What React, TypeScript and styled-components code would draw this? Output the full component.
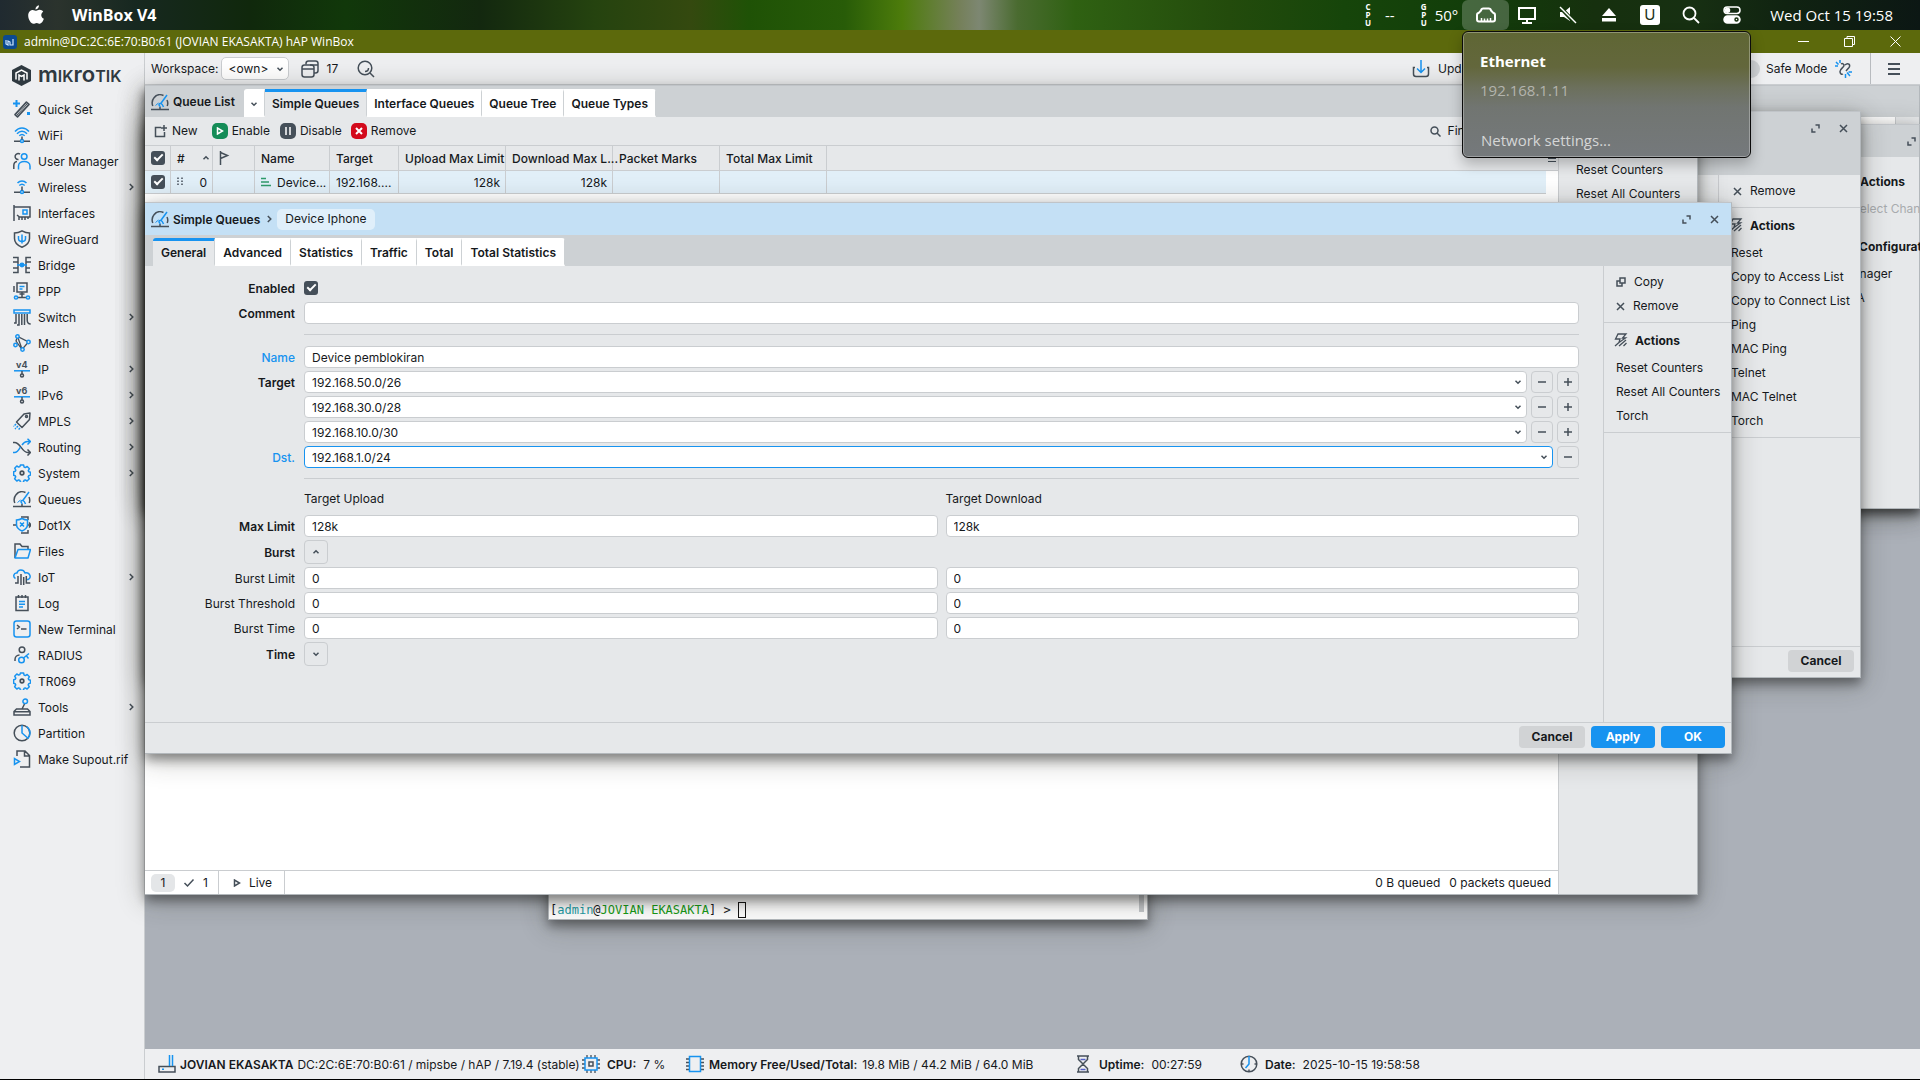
import React from "react";
import styled, { createGlobalStyle, css } from "styled-components";

const ink = "#16191c";
const dark = "#454f59";
const blue = "#1793f0";
const line = "#cacdd0";
const panel = "#e6e8ea";
const header = "#cdd1d4";

const GlobalStyle = createGlobalStyle`
  *, *::before, *::after { box-sizing: border-box; }
  html, body, #root { height: 100%; }
  body { margin: 0; background: #000; overflow: hidden; }
  body, button, input, select, table { font-family: Inter, "Liberation Sans", sans-serif; font-size: 12px; color: ${ink}; }
  button, input, select { margin: 0; padding: 0; border: 0; background: none; line-height: 16px; }
  input:focus, button:focus, select:focus { outline: none; }
  a { color: inherit; text-decoration: none; }
  p, h1, h2, ul { margin: 0; padding: 0; font: inherit; list-style: none; }
  svg { display: block; flex: none; }
`;

/* ---------- icons ---------- */

const Svg = styled.svg.attrs<{ $size?: number; $w?: number }>(p => ({
  width: p.$w ?? p.$size ?? 18,
  height: p.$size ?? 18,
  "aria-hidden": true,
}))<{ $size?: number; $w?: number; $color?: string; $stroke?: number }>`
  fill: none;
  stroke: ${p => p.$color ?? dark};
  stroke-width: ${p => p.$stroke ?? 1.5};
  .b { stroke: ${blue}; }
  .f { fill: ${panel}; }
  text { fill: ${dark}; stroke: none; font: 700 9px Inter, sans-serif; }
`;

const Gear = () => (
  <>
    <path className="b" strokeLinejoin="round" d="M7.4 1h3.2l.5 2.1 1.2.5 1.9-1.1 2.2 2.2-1.1 1.9.5 1.2 1.7.4v2.9l-1.8.6-.5 1.2 1.1 1.9-2.2 2.2-1.9-1.1-1.2.5-.5 2H7.4l-.5-2-1.2-.5-1.9 1.1-2.2-2.2 1.1-1.9-.5-1.2-1.6-.5V7.8l1.7-.5.5-1.2-1.1-1.9L3.8 2l1.9 1.1 1.2-.5z" />
    <circle cx="9" cy="9" r="1.8" strokeWidth="1.700" />
  </>
);

const Gauge = () => (
  <>
    <path d="M1.800 13C.8 10.500.8 7.500 3 4.800 5.500 1.500 9.500 1 12.500 2.500M16 7c1 2 1 4 .2 6M0 16.600h18M9 16v-2" />
    <path className="b" d="M16 2 9.800 10.500M9 14c.3-1.200-1-1-1-2.200 0-1 .8-1.500 1.800-1.300 1.200.2 1.800 1 2.700 3.500" />
    <path className="b" d="M4.500 12.500 7.500 10" strokeWidth="1" />
  </>
);

const icons: Record<string, React.ReactNode> = {
  quickset: <><path d="M2 14.600 13.400 2.200l2.600 2.200L4.500 16.800z" strokeLinejoin="round" strokeWidth="1.700" /><path d="m4 15 10-11" strokeWidth="1" /><path className="b" d="M3.500 0v7M0 3.500h7" strokeWidth="2" /><path className="b" d="M14 13.500h3" strokeWidth="3" /></>,
  wifi: <><path className="b" d="M2 5.500c4-4.700 10-4.700 14 0M4 7.800c3-3.400 7-3.400 10 0M6.300 9.800c1.700-1.600 3.700-1.600 5.400 0" /><circle className="b" cx="9" cy="15" r="1.500" /><path d="M1 15.300h6M11 15.300h6M9 10.500v3" /></>,
  users: <><path d="M7 2.200a3 3 0 1 0-1.500 5.300M.8 17v-3.500c0-2.200 1.300-3.700 3.200-4" /><circle className="b" cx="11.200" cy="4.500" r="2.800" /><path className="b" d="M5.500 17.500v-3.500c0-6 11.500-6 11.500 0v3.500" /></>,
  wireless: <><path className="b" d="M4.500 5c2.700-2.800 6.300-2.800 9 0M6.300 7.500c1.700-1.600 3.700-1.600 5.400 0" /><circle className="b" cx="9" cy="14" r="1.500" /><path d="M1 14.300h6M11 14.300h6M9 8.500v4" /></>,
  interfaces: <><path d="M1 1v16M1 3h16v10H6.500L4 11M6 13v3M9 13v3M12 13v3M15 13v2" /><path className="b" d="M10 6h4v4h-4z" /></>,
  wireguard: <><path d="M9 .8c2.600 1.500 5 2.200 7.500 2.200v5.500c0 4-3 7-7.500 8.700-4.500-1.700-7.500-4.700-7.500-8.700V3C4 3 6.400 2.300 9 .8z" /><path className="b" d="M5.500 6v2.500c0 2 1.500 3 3.500 3s3.500-1 3.500-3V6M9 4.500v9" /></>,
  bridge: <><path d="M0 1.500h5v15H0M0 6h5M0 12h5M18 1.500h-5v15h4M13 6h5M13 12h4" /><path className="b" d="M4 9h10" /><circle className="b" cx="9" cy="9" r="1.700" fill={blue} /></>,
  ppp: <><path d="M4 1h10v9H4zM1 4v6M6.500 12h5M9 10v5M4 15.500h10" /><path className="b" d="M6.500 4.500h5M6.500 7h3" /><circle className="b f" cx="3" cy="15.500" r="1.600" /><circle className="b f" cx="15" cy="15.500" r="1.600" /></>,
  switch: <><path d="M3 6v9H1M6 6v11H4M8.800 6v11M11.500 6v11M14.200 6v6c0 2 1 4 3.500 4" /><path className="b" d="M1 2h16v3H1z" /></>,
  mesh: <><path d="M4.500 2.500 3 7l6 8.500L15.500 8zM4.500 2.500 9 15" strokeWidth="1.300" /><circle className="b f" cx="4.500" cy="2.500" r="1.700" /><circle className="b f" cx="15.500" cy="8" r="1.700" /><circle className="b f" cx="9.500" cy="15.500" r="1.700" /><circle className="b f" cx="2.500" cy="11" r="1.700" /></>,
  ip: <><text x="3" y="7.500">v4</text><path className="b" d="M1 10.800h16" /><path d="M9 11v3" /><circle cx="9" cy="15.500" r="1.500" /></>,
  ipv6: <><text x="3" y="7.500">v6</text><path className="b" d="M1 10.800h16" /><path d="M9 11v3" /><circle cx="9" cy="15.500" r="1.500" /></>,
  mpls: <><path d="m3.500 10 7.500-8 6-1-.5 6.500-7.500 8z" strokeLinejoin="round" /><circle cx="13.500" cy="4.500" r="1" /><path className="b" d="m3 12-2.500 2.500M5 14l-3 3M7 16l-1.500 1.500" strokeDasharray="2 1" /></>,
  routing: <><path d="M0 4.500h1.500c6 0 7.500 10 13 10H17M14.500 11.500l3 3-3 3" /><path className="b" d="M0 14.500h1.500c3 0 4.500-3 6-5.500M9 7c1.300-2 2.800-3.500 5.500-3.500H17M14.500.8l3 2.700-3 3" /></>,
  gear: <Gear />,
  gauge: <Gauge />,
  dot1x: <><path d="M8 1h7v3M8 17h7v-3M0 9h3M15 9h3M16 6.500 18 9l-2 2.500" /><path className="b" d="M3.500 4c2 0 3.600-.5 5.500-1.500C11 3.500 12.500 4 14.500 4v4.500c0 3-2 5-5.500 6.500-3.500-1.500-5.500-3.500-5.500-6.500zM7 6.500l4 4M11 6.500l-4 4" /></>,
  files: <><path d="M2 16V2h5l2 2.500h6V7" /><path className="b" d="M5 7.500h12.500L15 16H2z" strokeLinejoin="round" /></>,
  iot: <><path className="b" d="M2.500 10.500C-.5 9 .8 4.500 4 5c1-3.800 6.500-4 8 0 5-1 7 5 3 6.500h-2" /><path d="M5 8v7H2M8 6v11M10.700 9v8M13.300 8v7h4" /></>,
  log: <><path d="M3 3h12v13.500H3zM5.500 1v3M9 1v3M12.500 1v3" /><path className="b" d="M6 7.500h6M6 10.200h6M6 13h4" /></>,
  terminal: <><rect className="b" x="1" y="1" width="16" height="16" rx="2.500" /><path d="m4 5 2.300 2L4 9M8 9h5.500" /></>,
  radius: <><circle cx="9" cy="3.800" r="2.800" /><path d="M2 15v-1.500C2 11 4 9 6.500 9" /><circle className="b" cx="8.500" cy="14" r="2.800" /><path className="b" d="m10.500 12 5.500-4.500M13.500 10l2 2.500" /></>,
  tools: <><path d="M1 13.500 3.500 11h11l2.500 2.500v3.500H1zM1 13.800h16M9 11l2.500-5" /><circle className="b" cx="12.200" cy="3.300" r="2.300" /></>,
  partition: <><circle cx="9" cy="9" r="7.800" /><path className="b" d="M9 1.200V9l6 5.300c3-3.500 2.700-9-1.500-11.800" /></>,
  supout: <><path d="M4 6V1h8l4.500 4.500V17H7M11.500 1v5h5" /><path className="b" d="M1.500 8.500v6l5-3z" /></>,
};

const Icon = ({ name }: { name: string }) => <Svg viewBox="0 0 18 18">{icons[name]}</Svg>;
const Chevron = ({ dir = "down" }: { dir?: "down" | "up" | "right" }) => (
  <Svg viewBox="0 0 8 8" $size={8}>
    <path d={dir === "down" ? "M1.500 2.800 4 5.200l2.500-2.400" : dir === "up" ? "M1.500 5.200 4 2.800l2.500 2.400" : "M2.800 1 5.800 4l-3 3"} />
  </Svg>
);
const Expand = () => <Svg viewBox="0 0 9 9" $size={9}><path d="M4.500 1H8v3.500M1 4.500V8h3.500" /></Svg>;
const Cross = () => <Svg viewBox="0 0 9 9" $size={9}><path d="m1 1 7 7M8 1 1 8" /></Svg>;
const Bolt = () => (
  <Svg viewBox="0 0 14 14" $size={14} $stroke={1.3}>
    <path d="M4 1h8L8.500 5h3L5 9.500 6 6H1.500zM1 13 5 9.500M5 13l7-6M9.500 13l3-3" />
  </Svg>
);
const CopyIcon = () => <Svg viewBox="0 0 10 10" $size={10}><path d="M4 1h5v5H4zM4 4H1v5h5V6" /></Svg>;

/* ---------- desktop menu bar ---------- */

const Screen = styled.div`
  height: 100vh;
  display: flex;
  flex-direction: column;
  padding-bottom: 1px;
`;

const MenuBar = styled.header`
  position: relative;
  z-index: 20;
  flex: 0 0 30px;
  display: flex;
  align-items: center;
  padding: 0 27px 0 28px;
  color: #fff;
  font-family: "Open Sans", "Noto Sans", sans-serif;
  font-size: 15px;
  background: linear-gradient(90deg, #202a30 0%, #2b332d 3%, #172820 7%, #10280c 13%, #11380a 18%, #13280f 25%, #25430f 31%, #34490f 36%, #1f5206 39%, #285c08 44%, #4d7c0b 47%, #75805a 50%, #7d8772 51%, #4a6b30 53%, #2f6112 56%, #234b0c 64%, #16450a 70%, #123d0a 77%, #16300e 83%, #173012 88%, #102311 93%, #0c1714 100%);
`;

const AppName = styled.strong`
  margin-left: 28px;
  flex: 1;
  font-size: 16px;
`;

const Tray = styled.div`
  display: flex;
  align-items: center;
`;

const Gauges = styled.div`
  display: flex;
  align-items: center;
  gap: 14px;
  padding-right: 4px;
  & + & { padding-left: 22px; gap: 8px; }
`;

const Stacked = styled.span`
  display: grid;
  font-size: 8px;
  line-height: 8px;
  font-weight: 700;
  text-align: center;
`;

const TrayButton = styled.button<{ $active?: boolean }>`
  width: ${p => (p.$active ? 47 : 41)}px;
  height: 30px;
  margin-right: ${p => (p.$active ? -3 : 0)}px;
  display: grid;
  place-items: center;
  border-radius: 6px;
  background: ${p => (p.$active ? "rgba(255,255,255,.22)" : "none")};
`;

const UBox = styled.span`
  width: 20px;
  height: 20px;
  border-radius: 3px;
  background: #fff;
  color: #1b2f17;
  font-size: 15px;
  line-height: 20px;
`;

const Clock = styled.time`
  margin-left: 18px;
`;

const white = { $color: "#fff" };

const Popover = styled.section`
  position: absolute;
  top: 31px;
  right: 169px;
  width: 289px;
  height: 127px;
  padding: 19px 17px 0;
  display: flex;
  flex-direction: column;
  border: 1px solid #0b0b0b;
  border-radius: 6px;
  box-shadow: inset 0 0 0 1px rgba(255,255,255,.3), 0 6px 14px rgba(0,0,0,.25);
  background: linear-gradient(180deg, #5f6634 0%, #63673c 28%, #6c705d 45%, #717571 60%, #75797c 100%);
  font-size: 15px;
  line-height: 20px;
  p { margin-top: 9px; color: #b3b4ad; }
  a { margin: 30px 1px 0; color: #d5d6d6; }
`;

const MenuBarView = () => (
  <MenuBar>
    <Svg viewBox="0 0 16 20" $w={16} $size={20} $color="none">
      <path fill="#fff" d="M11 .2c.1 2.200-1.600 4.300-3.500 4.200C7.200 2.400 9 .4 11 .2zM8.300 5.700c.8 0 1.900-1 3.500-.9 1.300.1 2.600.7 3.400 1.900-2.900 1.800-2.400 5.900.7 7.100-.7 2-2.200 4.800-4 4.900-1.200 0-1.700-.8-3.200-.8s-2 .8-3.200.8C3 18.800.2 14.200.2 10.400.2 6.900 2.400 5 4.700 4.900c1.500 0 2.700.8 3.600.8z" />
    </Svg>
    <AppName>WinBox V4</AppName>
    <Tray>
      <Gauges><Stacked><span>C</span><span>P</span><span>U</span></Stacked><span>--</span></Gauges>
      <Gauges><Stacked><span>G</span><span>P</span><span>U</span></Stacked><span>50°</span></Gauges>
      <TrayButton $active aria-label="Network">
        <Svg viewBox="0 0 20 16" $w={20} $size={16} {...white}><path d="M3 14.500c-1.200 0-2-.8-2-2V8c0-1.200.6-2 2-2.300L5 3.500C5.300 2 6 1.500 7.200 1.500h5.600c1.200 0 1.900.5 2.200 2l2 2.200c1.400.3 2 1.100 2 2.300v4.500c0 1.200-.8 2-2 2z" strokeWidth="2" /><path d="M5.500 11v3M8.500 11.500V14M11.500 11.500V14M14.500 11v3" /></Svg>
      </TrayButton>
      <TrayButton aria-label="Display">
        <Svg viewBox="0 0 20 18" $w={20} $size={18} {...white}><path d="M2 2h16v11H2z" strokeWidth="2" /><path d="M5 17h10M10 13v4" strokeWidth="2" /></Svg>
      </TrayButton>
      <TrayButton aria-label="Muted">
        <Svg viewBox="0 0 18 18" {...white}><path fill="#fff" stroke="none" d="M1 6h4l6-5v14L5 11H1z" /><path d="m1 1 15 16" stroke="#16390e" strokeWidth="4" /><path d="m1 1 16 16" /></Svg>
      </TrayButton>
      <TrayButton aria-label="Eject">
        <Svg viewBox="0 0 16 14" $w={16} $size={14} $color="none"><path fill="#fff" d="M8 0l7 8H1zM1 10h14v3.500H1z" /></Svg>
      </TrayButton>
      <TrayButton aria-label="Input"><UBox>U</UBox></TrayButton>
      <TrayButton aria-label="Search">
        <Svg viewBox="0 0 18 18" {...white} $stroke={1.8}><circle cx="7.500" cy="7.500" r="6" /><path d="m12 12 5 5" /></Svg>
      </TrayButton>
      <TrayButton aria-label="Control centre">
        <Svg viewBox="0 0 18 18" {...white}><rect x="1" y="1" width="16" height="6.500" rx="3.200" /><circle cx="4.500" cy="4.200" r="2" fill="#fff" /><rect x="1" y="10" width="16" height="7" rx="3.500" fill="#fff" /><circle cx="13.500" cy="13.500" r="1.500" stroke="#16300e" /></Svg>
      </TrayButton>
      <Clock>Wed Oct 15 19:58</Clock>
    </Tray>
    <Popover>
      <strong>Ethernet</strong>
      <p>192.168.1.11</p>
      <a href="#network">Network settings...</a>
    </Popover>
  </MenuBar>
);

/* ---------- title bar ---------- */

const TitleBar = styled.div`
  flex: 0 0 23px;
  display: flex;
  align-items: center;
  gap: 7px;
  padding: 0 18px 0 3px;
  background: #5c690c;
  color: #fff;
  font-family: "Open Sans", "Noto Sans", sans-serif;
  span { flex: 1; }
`;

const TitleButton = styled.button`
  width: 14px;
  height: 23px;
  margin-left: 25px;
  display: grid;
  place-items: center;
`;

/* ---------- shell ---------- */

const Shell = styled.div`
  flex: 1;
  min-height: 0;
  display: flex;
  background: #eeeff1;
`;

const Sidebar = styled.aside`
  flex: 0 0 145px;
  border-right: 1px solid ${line};
  padding-top: 11px;
`;

const Brand = styled.div`
  display: flex;
  align-items: center;
  gap: 7px;
  height: 22px;
  margin: 0 0 10px 12px;
  color: #2f3940;
  font-size: 22px;
  font-weight: 600;
  line-height: 22px;
  span { font-size: 16px; text-transform: uppercase; }
`;

const NavLink = styled.a`
  display: flex;
  align-items: center;
  gap: 7px;
  height: 26px;
  padding: 0 9px 0 13px;
  font-size: 12px;
  span { flex: 1; white-space: nowrap; }
`;

const Main = styled.main`
  flex: 1;
  min-width: 0;
  display: flex;
  flex-direction: column;
`;

const Toolbar = styled.div`
  position: relative;
  z-index: 2;
  flex: 0 0 32px;
  display: flex;
  align-items: center;
  padding-left: 6px;
  border-bottom: 1px solid ${line};
  background: #eeeff1;
`;

const WorkspaceLabel = styled.label`
  display: flex;
  align-items: center;
  gap: 2px;
`;

const SelectBox = styled.span`
  display: grid;
  align-items: center;
  width: 68px;
  height: 23px;
  border: 1px solid ${line};
  border-radius: 5px;
  background: #fff;
  select, svg { grid-area: 1 / 1; }
  select { appearance: none; padding-left: 7px; height: 21px; }
  svg { justify-self: end; margin-right: 4px; pointer-events: none; }
`;

const ToolButton = styled.button<{ $gap?: number; $ml?: number }>`
  display: flex;
  align-items: center;
  gap: ${p => p.$gap ?? 8}px;
  margin-left: ${p => p.$ml ?? 12}px;
  white-space: nowrap;
`;

const Push = styled.div`
  margin-left: auto;
  display: flex;
  align-items: center;
`;

const UpdateButton = styled(ToolButton)`
  width: 290px;
`;

const SafeMode = styled.label`
  display: flex;
  align-items: center;
  gap: 6px;
  width: 104px;
  margin-left: 28px;
  input {
    appearance: none;
    width: 30px;
    height: 18px;
    border-radius: 9px;
    background: #cfd2d5;
  }
`;

const MenuButton = styled.button`
  width: 50px;
  height: 31px;
  margin-left: 18px;
  padding-right: 3px;
  display: grid;
  place-items: center;
  border-left: 1px solid #b8bbbf;
`;

const Canvas = styled.div`
  position: relative;
  flex: 1;
  background: #abb0b8;
`;

const StatusBar = styled.footer`
  position: relative;
  z-index: 3;
  flex: 0 0 30px;
  display: grid;
  grid-template-columns: 424px 104px 388px 166px auto;
  align-items: center;
  padding-left: 13px;
  background: #eeeff1;
`;

const Stat = styled.div<{ $gap?: number }>`
  display: flex;
  align-items: center;
  gap: ${p => p.$gap ?? 7}px;
  white-space: nowrap;
  strong { font-weight: 600; }
`;

/* ---------- windows ---------- */

const WindowFrame = styled.section<{ $l?: number; $r: number; $t: number; $h: number; $w?: number; $z: number }>`
  position: absolute;
  ${p => (p.$w ? css`width: ${p.$w}px;` : css`left: ${p.$l ?? 0}px;`)}
  right: ${p => p.$r}px;
  top: ${p => p.$t}px;
  height: ${p => p.$h}px;
  z-index: ${p => p.$z};
  display: flex;
  flex-direction: column;
  background: ${panel};
  border: 1px solid #b3b8bc;
  border-top-color: #c0c4c8;
  border-left: 0;
  box-shadow: 0 6px 10px rgba(0,0,0,.36), 0 5px 26px rgba(40,40,30,.32);
`;

const WindowHead = styled.header<{ $h: number; $bg?: string }>`
  flex: none;
  height: ${p => p.$h}px;
  display: flex;
  background: ${p => p.$bg ?? header};
`;

const HeadButtons = styled.div`
  height: 32px;
  margin-left: auto;
  padding-right: 12px;
  display: flex;
  align-items: center;
  gap: 19px;
  button { display: grid; }
`;

const HeadTitle = styled.h1<{ $w?: number }>`
  display: flex;
  align-items: center;
  gap: 4px;
  width: ${p => (p.$w ? p.$w + "px" : "auto")};
  padding-left: 6px;
  font-weight: 600;
  white-space: nowrap;
`;

const Tabs = styled.div<{ $pad?: number }>`
  display: flex;
  align-items: stretch;
  height: 28px;
  padding-left: ${p => p.$pad ?? 0}px;
`;

const Tab = styled.button<{ $active?: boolean }>`
  padding: 0 8px;
  border-right: 1px solid ${header};
  border-top: 3px solid ${p => (p.$active ? blue : "#fff")};
  border-bottom: 2px solid ${p => (p.$active ? panel : "#fff")};
  background: ${p => (p.$active ? panel : "#fff")};
  font-weight: 600;
  white-space: nowrap;
  &:first-child { border-top-left-radius: 3px; }
  &:last-child { border-top-right-radius: 3px; }
`;

const Side = styled.aside<{ $w: number }>`
  flex: 0 0 ${p => p.$w}px;
  min-width: 0;
  border-left: 1px solid ${line};
`;

const SideGroup = styled.div<{ $pt?: number; $plain?: boolean }>`
  padding: ${p => p.$pt ?? 4}px 0 4px;
  border-bottom: ${p => (p.$plain ? "0" : `1px solid ${line}`)};
`;

const SideButton = styled.button<{ $pl?: number; $muted?: boolean }>`
  display: flex;
  align-items: center;
  gap: 8px;
  height: 24px;
  padding-left: ${p => p.$pl ?? 12}px;
  color: ${p => (p.$muted ? "#a8abae" : ink)};
  white-space: nowrap;
`;

const SideTitle = styled.h2<{ $pl?: number }>`
  display: flex;
  align-items: center;
  gap: 7px;
  height: 32px;
  padding-left: ${p => p.$pl ?? 10}px;
  font-weight: 700;
`;

const Row = styled.div`
  flex: 1;
  min-height: 0;
  display: flex;
`;

const Fill = styled.div`
  flex: 1;
  min-width: 0;
  display: flex;
  flex-direction: column;
`;

const Foot = styled.footer`
  flex: 0 0 31px;
  display: flex;
  align-items: center;
  justify-content: flex-end;
  gap: 6px;
  padding: 0 6px 2px;
  border-top: 1px solid ${line};
`;

const FootButton = styled.button<{ $primary?: boolean }>`
  width: ${p => (p.$primary ? 64 : 66)}px;
  height: 22px;
  border-radius: 4px;
  font-weight: 700;
  background: ${p => (p.$primary ? blue : "#d1d3d5")};
  color: ${p => (p.$primary ? "#fff" : ink)};
`;

/* queue list */

const ListTools = styled.div`
  flex: 0 0 28px;
  display: flex;
  align-items: center;
`;

const Badge = styled.span<{ $bg: string }>`
  width: 16px;
  height: 16px;
  display: grid;
  place-items: center;
  border-radius: 5px;
  background: ${p => p.$bg};
`;

const Check = styled.input.attrs({ type: "checkbox" })`
  appearance: none;
  display: grid;
  place-items: center;
  width: 14px;
  height: 14px;
  border-radius: 3px;
  background: ${dark};
  &::before {
    content: "";
    width: 9px;
    height: 5px;
    margin-bottom: 3px;
    border: solid #fff;
    border-width: 0 0 2px 2px;
    transform: rotate(-45deg);
  }
`;

const ListBody = styled.div`
  flex: 1;
  background: #fff;
`;

const TableBar = styled.div`
  display: flex;
  border-top: 1px solid ${line};
  background: linear-gradient(${panel} 24px, ${line} 24px, ${line} 25px, #fff 25px);
`;

const Gutter = styled.span`
  flex: 0 0 12px;
  display: grid;
  justify-content: center;
  padding-top: 8px;
`;

const QueueTable = styled.table`
  flex: 1;
  table-layout: fixed;
  width: 100px;
  border-collapse: separate;
  border-spacing: 0;
  th, td {
    padding: 0 5px 0 6px;
    border-right: 1px solid ${line};
    border-bottom: 1px solid ${line};
    text-align: left;
    white-space: nowrap;
  }
  th { height: 25px; padding-right: 2px; font-weight: 500; }
  td { height: 23px; background: #e1eff8; }
  th:last-child, td:last-child { border-right: 0; }
`;

const Cell = styled.div<{ $end?: boolean; $between?: boolean }>`
  display: flex;
  align-items: center;
  gap: 6px;
  justify-content: ${p => (p.$end ? "flex-end" : p.$between ? "space-between" : "flex-start")};
`;

const ListFoot = styled.div`
  flex: 0 0 24px;
  display: flex;
  align-items: center;
  border-top: 1px solid ${line};
  background: #fff;
`;

const FootCell = styled.div<{ $pl: number; $pr: number }>`
  display: flex;
  align-items: center;
  gap: 8px;
  height: 23px;
  padding: 0 ${p => p.$pr}px 0 ${p => p.$pl}px;
  border-right: 1px solid ${line};
`;

const Pill = styled.span`
  width: 24px;
  height: 18px;
  line-height: 18px;
  border-radius: 5px;
  background: #e4e6e8;
  text-align: center;
`;

const Queued = styled.p`
  display: flex;
  gap: 9px;
  margin-left: auto;
  padding-right: 7px;
`;

const Crumb = styled.button`
  height: 21px;
  margin: auto 0;
  padding: 0 8px;
  border-radius: 5px;
  background: #e0effa;
`;

/* form */

const Form = styled.form`
  flex: 1;
  display: grid;
  grid-template-columns: 150px minmax(0, 1fr);
  column-gap: 9px;
  row-gap: 3px;
  align-content: start;
  padding: 11px 24px 0 0;
`;

const Label = styled.label<{ $kind?: "blue" | "light" }>`
  align-self: center;
  text-align: right;
  font-weight: ${p => (p.$kind === "light" ? 400 : p.$kind === "blue" ? 500 : 600)};
  color: ${p => (p.$kind === "blue" ? blue : ink)};
`;

const Line = styled.div<{ $h?: number }>`
  display: flex;
  align-items: center;
  gap: 4px;
  height: ${p => p.$h ?? 22}px;
  grid-column: 2;
`;

const Pair = styled(Line)`
  display: grid;
  grid-template-columns: 1fr 1fr;
  gap: 8px;
`;

const Captions = styled(Pair)`
  padding-bottom: 5px;
`;

const Rule = styled.hr`
  grid-column: 2;
  width: 100%;
  height: 1px;
  margin: 7px 0 8px;
  border: 0;
  background: ${line};
`;

const Box = styled.div<{ $focus?: boolean }>`
  flex: 1;
  display: flex;
  align-items: center;
  height: 22px;
  border: 1px solid ${p => (p.$focus ? blue : line)};
  border-radius: 4px;
  background: #fff;
  input { flex: 1; min-width: 0; height: 20px; padding: 0 7px; }
  button { display: grid; padding-right: 4px; }
`;

const SmallButton = styled.button<{ $h?: number }>`
  width: ${p => p.$h ?? 22}px;
  height: ${p => p.$h ?? 22}px;
  display: grid;
  place-items: center;
  border: 1px solid ${line};
  border-radius: 4px;
`;

/* terminal */

const Term = styled.pre`
  flex: 1;
  display: flex;
  align-items: flex-end;
  justify-content: space-between;
  margin: 0;
  padding: 0 3px 1px 1px;
  background: #fcfcfc;
  border-left: 1px solid #b3b8bc;
  font: 12px/16px "DejaVu Sans Mono", "Liberation Mono", monospace;
  b { font-weight: 400; color: #1d9aa3; }
  em { font-style: normal; color: #169a16; }
  p { display: flex; }
`;

const Caret = styled.span`
  width: 8px;
  height: 16px;
  border: 1px solid #111;
`;

const Scroll = styled.i`
  width: 5px;
  height: 40px;
  margin-bottom: 6px;
  background: #c4c7ca;
`;

/* ---------- content ---------- */

const nav: [string, string, boolean?][] = [
  ["quickset", "Quick Set"], ["wifi", "WiFi"], ["users", "User Manager"], ["wireless", "Wireless", true],
  ["interfaces", "Interfaces"], ["wireguard", "WireGuard"], ["bridge", "Bridge"], ["ppp", "PPP"],
  ["switch", "Switch", true], ["mesh", "Mesh"], ["ip", "IP", true], ["ipv6", "IPv6", true],
  ["mpls", "MPLS", true], ["routing", "Routing", true], ["gear", "System", true], ["gauge", "Queues"],
  ["dot1x", "Dot1X"], ["files", "Files"], ["iot", "IoT", true], ["log", "Log"],
  ["terminal", "New Terminal"], ["radius", "RADIUS"], ["gear", "TR069"], ["tools", "Tools", true],
  ["partition", "Partition"], ["supout", "Make Supout.rif"],
];

const columns = [26, 42, 42, 75, 69, 107, 107, 107, 107];

const Col = styled.col<{ $w: number }>`width: ${p => p.$w}px;`;

const TabsBottom = styled(Tabs)`
  align-self: flex-end;
  button { padding: 0 7px; }
  button:first-child { width: 21px; padding: 0 6px; }
`;

const FindButton = styled(ToolButton)`
  margin: 0 86px 0 auto;
`;

const ListSide = styled(Side)`
  h2 { height: 41px; }
`;

const QueueList = () => (
  <WindowFrame $r={222} $t={0} $h={810} $z={4}>
    <Row>
      <Fill>
        <WindowHead $h={31}>
          <HeadTitle $w={99}><Icon name="gauge" />Queue List</HeadTitle>
          <TabsBottom>
            <Tab aria-label="Windows"><Chevron /></Tab>
            <Tab $active>Simple Queues</Tab>
            <Tab>Interface Queues</Tab>
            <Tab>Queue Tree</Tab>
            <Tab>Queue Types</Tab>
          </TabsBottom>
        </WindowHead>
        <ListTools>
          <ToolButton $gap={5} $ml={9}>
            <Svg viewBox="0 0 13 13" $size={13}><path d="M7 2.500H1.500v9h9V7M10 0v6M7 3h6" /></Svg>New
          </ToolButton>
          <ToolButton $gap={4} $ml={14}>
            <Badge $bg="#148c57"><Svg viewBox="0 0 8 8" $size={8} $color="#fff"><path d="M1.500 1v6l5-3z" /></Svg></Badge>Enable
          </ToolButton>
          <ToolButton $gap={4} $ml={10}>
            <Badge $bg={dark}><Svg viewBox="0 0 8 8" $size={8} $color="#fff"><path d="M2 0v8M6 0v8" /></Svg></Badge>Disable
          </ToolButton>
          <ToolButton $gap={4} $ml={9}>
            <Badge $bg="#d30a1c"><Svg viewBox="0 0 8 8" $size={8} $color="#fff" $stroke={2}><path d="m1 1 6 6M7 1 1 7" /></Svg></Badge>Remove
          </ToolButton>
          <FindButton $gap={7}>
            <Svg viewBox="0 0 11 11" $size={11}><circle cx="4.500" cy="4.500" r="3.500" /><path d="m7 7 3.500 3.500" /></Svg>Find
          </FindButton>
        </ListTools>
        <TableBar>
          <QueueTable>
            <colgroup>{columns.map((w, i) => <Col key={i} $w={w} />)}<col /></colgroup>
            <thead>
              <tr>
                <th><Check defaultChecked aria-label="Select all" /></th>
                <th><Cell $between>#<Chevron dir="up" /></Cell></th>
                <th><Svg viewBox="0 0 11 14" $w={11} $size={14}><path d="M1.500 0v14M1.500 1.500l7 3-7 3" /></Svg></th>
                <th>Name</th><th>Target</th><th>Upload Max Limit</th><th>Download Max L...</th>
                <th>Packet Marks</th><th>Total Max Limit</th><th />
              </tr>
            </thead>
            <tbody>
              <tr>
                <td><Check defaultChecked aria-label="Select row" /></td>
                <td><Cell $between><Svg viewBox="0 0 6 10" $w={6} $size={10} strokeDasharray="1.500 1.500"><path d="M1 .5v9M5 .5v9" /></Svg>0</Cell></td>
                <td />
                <td><Cell><Svg viewBox="0 0 10 10" $size={10} $color="#2f9b6b"><path d="M0 1.500h5M0 5h8M0 8.500h10" /></Svg>Device...</Cell></td>
                <td>192.168....</td>
                <td><Cell $end>128k</Cell></td>
                <td><Cell $end>128k</Cell></td>
                <td /><td /><td />
              </tr>
            </tbody>
          </QueueTable>
          <Gutter><Svg viewBox="0 0 8 8" $size={8} $stroke={1}><path d="M0 1.500h8M0 4.500h8M0 7.500h8" /></Svg></Gutter>
        </TableBar>
        <ListBody />
        <ListFoot>
          <FootCell $pl={6} $pr={10}>
            <Pill>1</Pill>
            <Svg viewBox="0 0 12 10" $w={12} $size={10}><path d="m1.500 5 3 3 6-6.500" /></Svg>1
          </FootCell>
          <FootCell $pl={14} $pr={12}>
            <Svg viewBox="0 0 8 8" $size={8}><path d="M1.500 1v6l5-3z" /></Svg>Live
          </FootCell>
          <Queued><span>0 B queued</span><span>0 packets queued</span></Queued>
        </ListFoot>
      </Fill>
      <ListSide $w={139}>
        <WindowHead $h={31} />
        <SideTitle><Bolt /></SideTitle>
        <SideButton $pl={17}>Reset Counters</SideButton>
        <SideButton $pl={17}>Reset All Counters</SideButton>
      </ListSide>
    </Row>
  </WindowFrame>
);

const targets = ["192.168.50.0/26", "192.168.30.0/28", "192.168.10.0/30"];
const bursts = ["Burst Limit", "Burst Threshold", "Burst Time"];
const Minus = () => <Svg viewBox="0 0 8 8" $size={8}><path d="M0 4h8" /></Svg>;
const Plus = () => <Svg viewBox="0 0 8 8" $size={8}><path d="M0 4h8M4 0v8" /></Svg>;

const CrumbGap = styled.span`padding: 0 4px 0 1px;`;

const TabStrip = styled.div`
  flex: 0 0 31px;
  display: flex;
  align-items: flex-end;
  background: ${header};
`;

const QueueDialog = () => (
  <WindowFrame $r={188} $t={117} $h={552} $z={6}>
    <WindowHead $h={32} $bg="#c4e0f5">
      <HeadTitle><Icon name="gauge" />Simple Queues<CrumbGap><Chevron dir="right" /></CrumbGap></HeadTitle>
      <Crumb>Device Iphone</Crumb>
      <HeadButtons><button aria-label="Maximize"><Expand /></button><button aria-label="Close"><Cross /></button></HeadButtons>
    </WindowHead>
    <TabStrip>
      <Tabs $pad={8}>
        <Tab $active>General</Tab><Tab>Advanced</Tab><Tab>Statistics</Tab><Tab>Traffic</Tab><Tab>Total</Tab><Tab>Total Statistics</Tab>
      </Tabs>
    </TabStrip>
    <Row>
      <Form>
        <Label htmlFor="enabled">Enabled</Label>
        <Line><Check id="enabled" defaultChecked /></Line>
        <Label htmlFor="comment">Comment</Label>
        <Line><Box><input id="comment" /></Box></Line>
        <Rule />
        <Label htmlFor="name" $kind="blue">Name</Label>
        <Line><Box><input id="name" defaultValue="Device pemblokiran" /></Box></Line>
        {targets.map((t, i) => (
          <React.Fragment key={t}>
            {i === 0 && <Label htmlFor="target0">Target</Label>}
            <Line>
              <Box><input id={"target" + i} aria-label="Target" defaultValue={t} /><button type="button" aria-label="Open"><Chevron /></button></Box>
              <SmallButton type="button" aria-label="Remove target"><Minus /></SmallButton>
              <SmallButton type="button" aria-label="Add target"><Plus /></SmallButton>
            </Line>
          </React.Fragment>
        ))}
        <Label htmlFor="dst" $kind="blue">Dst.</Label>
        <Line>
          <Box $focus><input id="dst" defaultValue="192.168.1.0/24" /><button type="button" aria-label="Open"><Chevron /></button></Box>
          <SmallButton type="button" aria-label="Clear"><Minus /></SmallButton>
        </Line>
        <Rule />
        <Captions><span>Target Upload</span><span>Target Download</span></Captions>
        <Label htmlFor="max">Max Limit</Label>
        <Pair>
          <Box><input id="max" defaultValue="128k" /></Box>
          <Box><input aria-label="Max Limit download" defaultValue="128k" /></Box>
        </Pair>
        <Label as="span">Burst</Label>
        <Line $h={24}><SmallButton type="button" $h={24} aria-label="Collapse burst"><Chevron dir="up" /></SmallButton></Line>
        {bursts.map(b => (
          <React.Fragment key={b}>
            <Label htmlFor={b} $kind="light">{b}</Label>
            <Pair>
              <Box><input id={b} defaultValue="0" /></Box>
              <Box><input aria-label={b + " download"} defaultValue="0" /></Box>
            </Pair>
          </React.Fragment>
        ))}
        <Label as="span">Time</Label>
        <Line $h={24}><SmallButton type="button" $h={24} aria-label="Expand time"><Chevron /></SmallButton></Line>
      </Form>
      <Side $w={128}>
        <SideGroup>
          <SideButton><CopyIcon />Copy</SideButton>
          <SideButton><Cross />Remove</SideButton>
        </SideGroup>
        <SideGroup $pt={1}>
          <SideTitle><Bolt />Actions</SideTitle>
          <SideButton>Reset Counters</SideButton>
          <SideButton>Reset All Counters</SideButton>
          <SideButton>Torch</SideButton>
        </SideGroup>
      </Side>
    </Row>
    <Foot><FootButton>Cancel</FootButton><FootButton $primary>Apply</FootButton><FootButton $primary>OK</FootButton></Foot>
  </WindowFrame>
);

const Registration = () => (
  <WindowFrame $r={59} $t={26} $h={567} $z={3}>
    <WindowHead $h={63}>
      <HeadButtons><button aria-label="Maximize"><Expand /></button><button aria-label="Close"><Cross /></button></HeadButtons>
    </WindowHead>
    <Row>
      <Fill />
      <Side $w={142}>
        <SideGroup><SideButton $pl={14}><Cross />Remove</SideButton></SideGroup>
        <SideGroup $pt={1}>
          <SideTitle><Bolt />Actions</SideTitle>
          {["Reset", "Copy to Access List", "Copy to Connect List", "Ping", "MAC Ping", "Telnet", "MAC Telnet", "Torch"].map(t => (
            <SideButton key={t}>{t}</SideButton>
          ))}
        </SideGroup>
      </Side>
    </Row>
    <Foot><FootButton>Cancel</FootButton></Foot>
  </WindowFrame>
);

const CornerButton = styled.button`
  margin-right: -14px;
`;

const CapsWindow = () => (
  <WindowFrame $r={0} $t={39} $h={385} $z={2}>
    <WindowHead $h={32}>
      <HeadButtons><CornerButton aria-label="Maximize"><Expand /></CornerButton></HeadButtons>
    </WindowHead>
    <Row>
      <Fill />
      <Side $w={92}>
        <SideGroup $pt={8} $plain>
          <SideTitle $pl={11}><Bolt />Actions</SideTitle>
          <SideButton $pl={24} $muted>Select Channel</SideButton>
        </SideGroup>
        <SideGroup $pt={5} $plain>
          <SideTitle $pl={31}>Configuration</SideTitle>
          <SideButton $pl={14}>Manager</SideButton>
          <SideButton $pl={20}>CA</SideButton>
        </SideGroup>
      </Side>
    </Row>
  </WindowFrame>
);

const BackWindow = () => (
  <WindowFrame $r={0} $t={0} $h={420} $z={1}>
    <WindowHead $h={31} />
    <Row><ListBody /><Side $w={24} /></Row>
  </WindowFrame>
);

const TermFrame = styled(WindowFrame)`
  width: 600px;
`;

const Terminal = () => (
  <TermFrame $l={403} $r={0} $t={600} $h={235} $z={2}>
    <Term>
      <p>[<b>admin</b>@<em>JOVIAN EKASAKTA</em>] &gt; <Caret /></p>
      <Scroll />
    </Term>
  </TermFrame>
);

export default function App() {
  return (
    <>
      <GlobalStyle />
      <Screen>
        <MenuBarView />
        <TitleBar>
          <Svg viewBox="0 0 14 14" $size={14} $color="#cfe6ff"><rect width="14" height="14" rx="3" fill="#0c4a8f" stroke="none" /><path d="M3 5v4l2 1V6l2 1v3h3V4" strokeWidth="1.200" /></Svg>
          <span>admin@DC:2C:6E:70:B0:61 (JOVIAN EKASAKTA) hAP WinBox</span>
          <TitleButton aria-label="Minimize"><Svg viewBox="0 0 11 11" $size={11} $color="#fff" $stroke={1}><path d="M0 5.500h11" /></Svg></TitleButton>
          <TitleButton aria-label="Restore"><Svg viewBox="0 0 11 11" $size={11} $color="#fff" $stroke={1}><path d="M.5 2.500h8v8h-8zM3 2.500v-2h7.500v8h-2" /></Svg></TitleButton>
          <TitleButton aria-label="Close"><Svg viewBox="0 0 11 11" $size={11} $color="#fff" $stroke={1}><path d="m.5.5 10 10M10.500.5l-10 10" /></Svg></TitleButton>
        </TitleBar>
        <Shell>
          <Sidebar>
            <Brand>
              <Svg viewBox="0 0 19 21" $w={19} $size={21} $color="none">
                <path fill="#2f3940" d="M9.500 0 19 5v11l-9.500 5L0 16V5z" />
                <path stroke="#fff" strokeWidth="1.500" d="M4 14.500V8l5.500-3L15 8v6.500M7 15.500V10l2.500 1.500L12 10v5.500" />
              </Svg>
              <div>m<span>ik</span>ro<span>tik</span></div>
            </Brand>
            <nav>
              {nav.map(([icon, label, more]) => (
                <NavLink key={label} href="#menu"><Icon name={icon} /><span>{label}</span>{more && <Chevron dir="right" />}</NavLink>
              ))}
            </nav>
          </Sidebar>
          <Main>
            <Toolbar>
              <WorkspaceLabel>Workspace:
                <SelectBox><select><option>&lt;own&gt;</option></select><Chevron /></SelectBox>
              </WorkspaceLabel>
              <ToolButton>
                <Svg viewBox="0 0 18 18"><rect x="1" y="5" width="12" height="12" rx="2.500" /><path d="M1 9h12M5 4.500V3.500C5 2 6 1 7.500 1h7C16 1 17 2 17 3.500v7c0 1.500-1 2.500-2.500 2.500H13M9 5h8" /></Svg>17
              </ToolButton>
              <ToolButton $ml={19} aria-label="Search">
                <Svg viewBox="0 0 18 18"><circle cx="8" cy="8" r="6.800" /><path d="m13 13 4 4M8 11.500c2 0 3.500-1.500 3.500-3.500" /></Svg>
              </ToolButton>
              <Push>
                <UpdateButton>
                  <Svg viewBox="0 0 18 18"><path d="M3 7.500H1.500V14c0 1.500 1 2.500 2.500 2.500h10c1.500 0 2.500-1 2.500-2.500V7.500H15" /><path className="b" d="M9 0v12M5 8.500l4 4 4-4" /></Svg>Updates
                </UpdateButton>
                <SafeMode><input type="checkbox" role="switch" />Safe Mode</SafeMode>
                <Svg viewBox="0 0 18 18"><path d="M7 4c1.500-1 3 0 3 1.500 0 2-4 3-4 6 0 2 1.500 3.500 3 2.500M11 5c3-3 6 0 4 2.500L12 11" /><path className="b" d="M1 6h3M2 2l2.500 2.500M6 0v3M13 12.500l3 3.500M11.500 14v4M14.500 12H18" /></Svg>
                <MenuButton aria-label="Menu"><Svg viewBox="0 0 12 12" $size={12} $stroke={2}><path d="M0 1h12M0 6h12M0 11h12" /></Svg></MenuButton>
              </Push>
            </Toolbar>
            <Canvas>
              <BackWindow />
              <CapsWindow />
              <Registration />
              <Terminal />
              <QueueList />
              <QueueDialog />
            </Canvas>
            <StatusBar>
              <Stat $gap={4}>
                <Svg viewBox="0 0 18 18"><path d="M1 11.500h16V17H1z" /><path className="b" d="M11.500 0v11M14.500 0v11M4 14.300h2" /></Svg>
                <strong>JOVIAN EKASAKTA</strong><span>DC:2C:6E:70:B0:61 / mipsbe / hAP / 7.19.4 (stable)</span>
              </Stat>
              <Stat>
                <Svg viewBox="0 0 18 18"><path d="M5 0v18M9 0v18M13 0v18M0 5h18M0 9h18M0 13h18" strokeWidth="1.300" /><rect className="b" x="3" y="3" width="12" height="12" fill="#eeeff1" /><path d="M7 7h4v4H7z" /></Svg>
                <strong>CPU:</strong><span>7 %</span>
              </Stat>
              <Stat $gap={5}>
                <Svg viewBox="0 0 18 18"><path d="M0 4h18M0 7.500h18M0 11h18M0 14.500h18" strokeWidth="1.300" /><rect className="b" x="3.500" y="1.500" width="11" height="15" fill="#eeeff1" /></Svg>
                <strong>Memory Free/Used/Total:</strong><span>19.8 MiB / 44.2 MiB / 64.0 MiB</span>
              </Stat>
              <Stat>
                <Svg viewBox="0 0 18 18"><path d="M3 1h12M3 17h12M4.500 1v3.500L9 9l4.500-4.500V1M4.500 17v-3.500L9 9l4.500 4.500V17" /><path stroke="#5560c8" d="M6.500 4.500h5M6.500 14.500h5" /></Svg>
                <strong>Uptime:</strong><span>00:27:59</span>
              </Stat>
              <Stat>
                <Svg viewBox="0 0 18 18"><circle cx="9" cy="9" r="7.800" /><path d="M1 9h2.500M14.500 9H17M9 14.500V17" /><path className="b" d="M9 1v8l-3.500 4" /></Svg>
                <strong>Date:</strong><span>2025-10-15 19:58:58</span>
              </Stat>
            </StatusBar>
          </Main>
        </Shell>
      </Screen>
    </>
  );
}
